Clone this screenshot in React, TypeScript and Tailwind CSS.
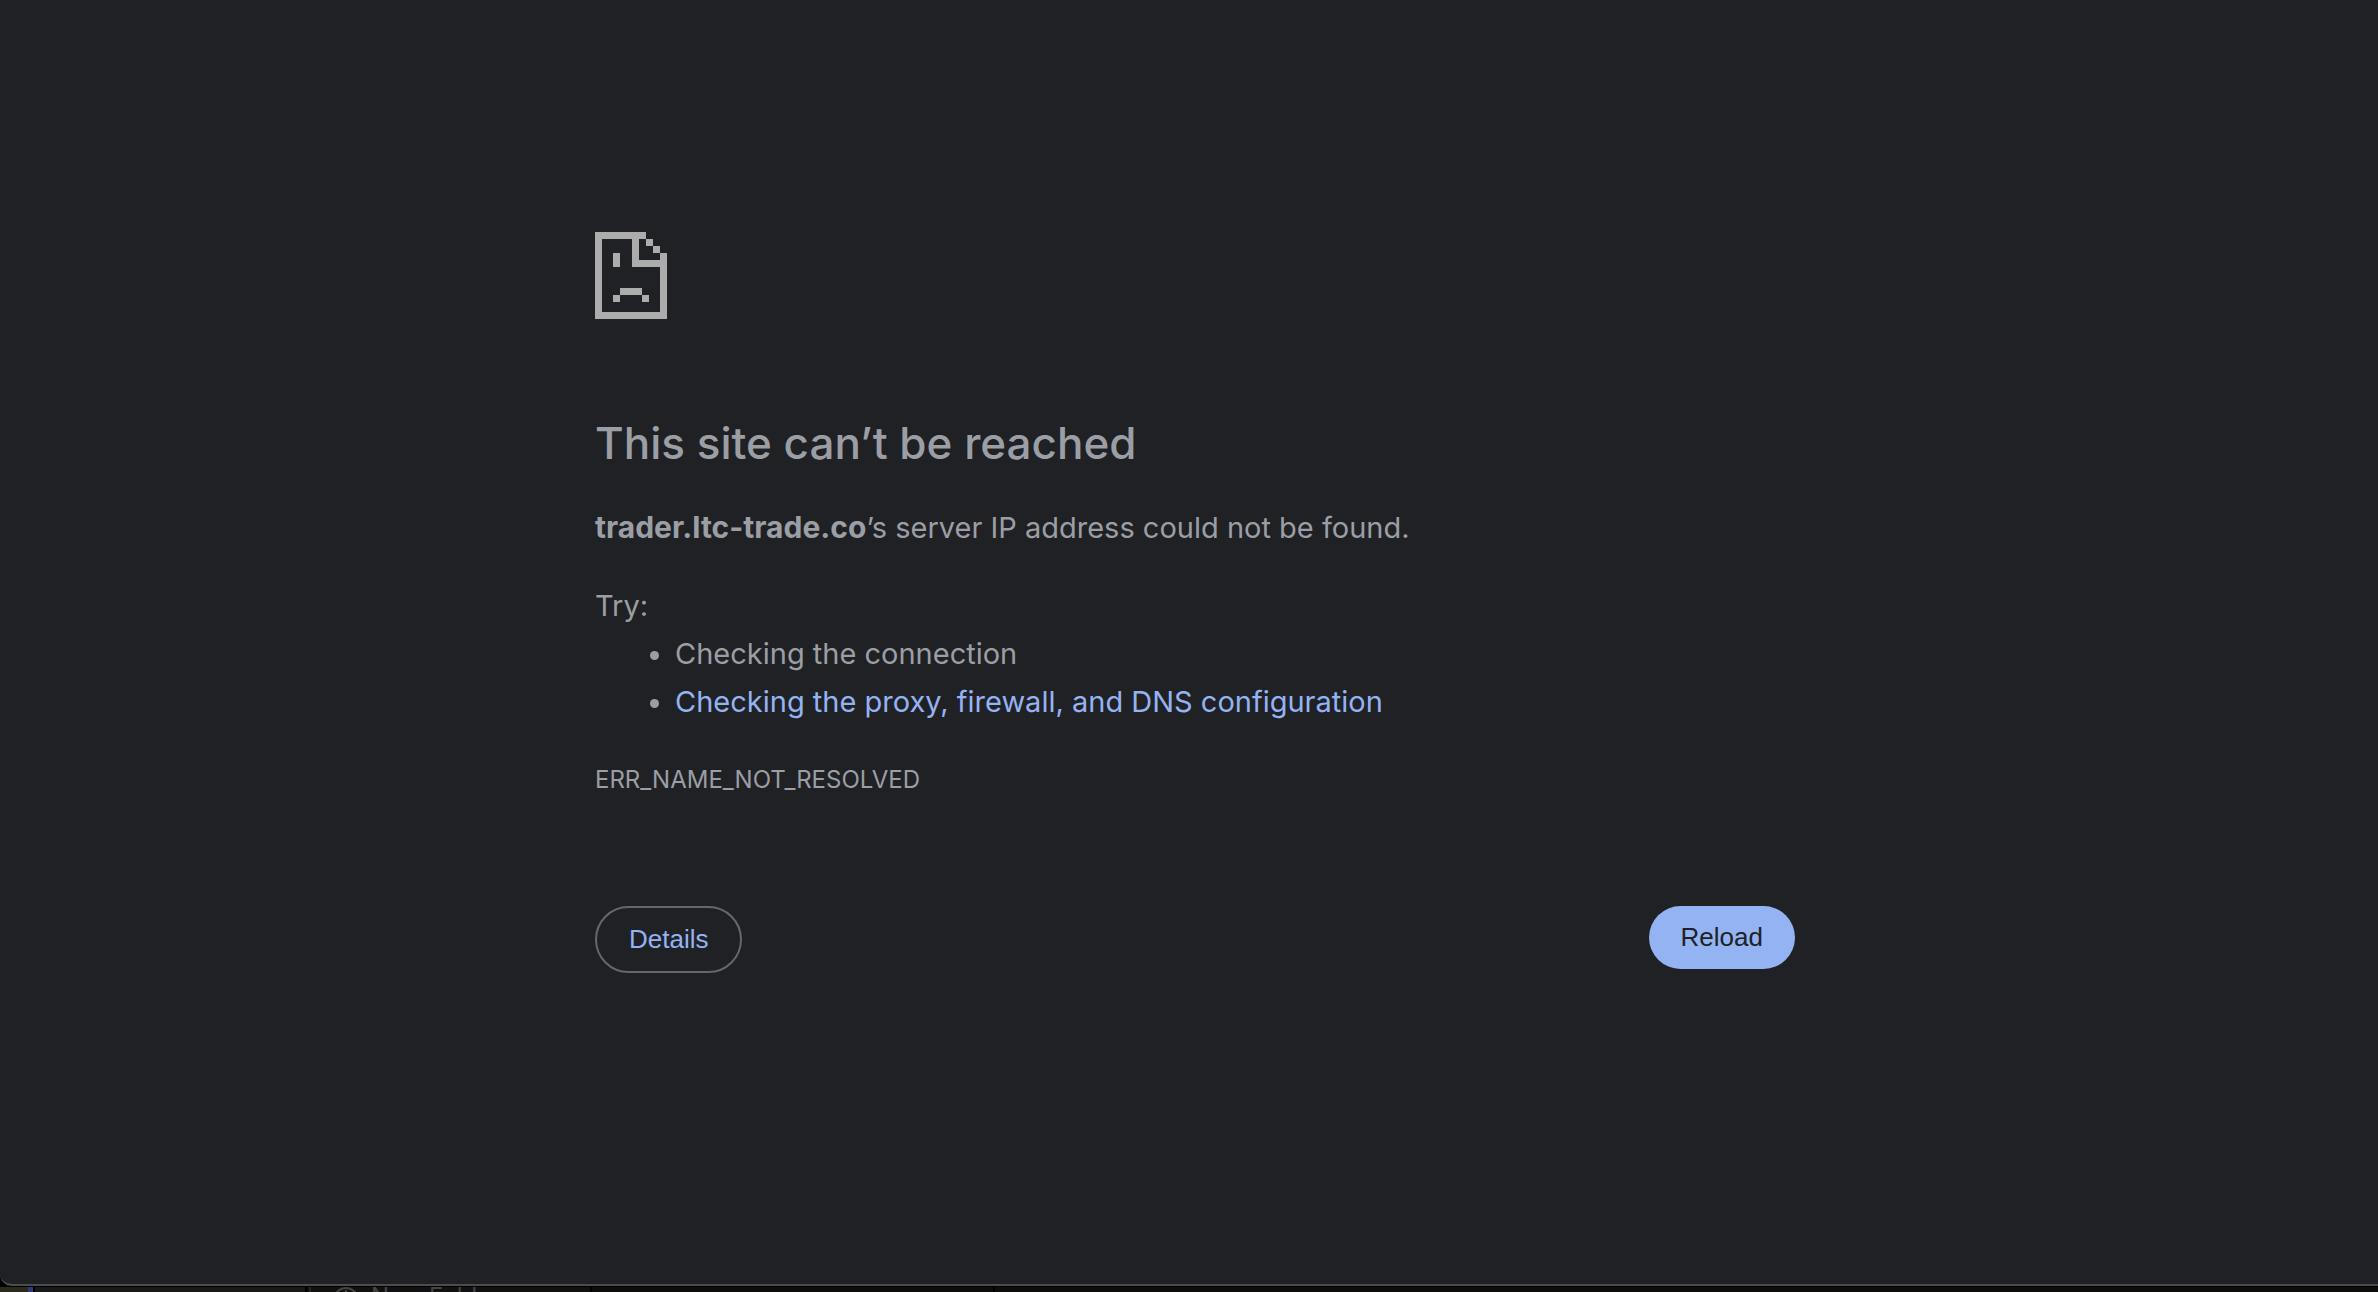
const suggestions = [
  { label: 'Checking the connection' },
  { label: 'Checking the proxy, firewall, and DNS configuration', href: '#buttons' },
];

function SadPageIcon() {
  return (
    <svg width="72" height="87" viewBox="0 0 72 87" fill="#acacac" shapeRendering="crispEdges" aria-hidden="true">
      <path d="M0 0H51V7H44V28H65V21H72V87H0ZM7 7V80H65V35H37V7Z" fillRule="evenodd" />
      <path d="M51 7H58V14H51ZM58 14H65V21H58Z" />
      <path d="M18 21H25V35H18ZM25 56H47V63H25ZM18 63H25V70H18ZM47 63H54V70H47Z" />
    </svg>
  );
}

function DesktopStrip() {
  return (
    <div className="flex h-[5px] overflow-hidden bg-[#0d0d0d] text-[#454545]">
      <div className="w-7 shrink-0 bg-[#2a2b1c]" />
      <div className="w-[5px] shrink-0 bg-[#2f3a80]" />
      <div className="mr-0.5 w-[274px] shrink-0 border-x-2 border-black bg-[#181818]" />
      <div className="flex w-[283px] shrink-0 gap-3 border-x-2 border-l-[#262626] border-r-black bg-[#111111] pl-[22px] text-[24px] leading-5">
        <svg width="26" height="26" viewBox="0 0 26 26" fill="none" stroke="currentColor" strokeWidth="2" className="shrink-0" aria-hidden="true">
          <circle cx="13" cy="13" r="12" />
          <path d="M13 3V20M8 15L13 20L18 15" />
        </svg>
        <span className="whitespace-nowrap">New Folder</span>
      </div>
      <div className="w-[403px] shrink-0 border-r-2 border-black" />
    </div>
  );
}

export default function App() {
  return (
    <div className="flex min-h-screen flex-col bg-black font-['Inter',sans-serif] text-[#9b9ea5]">
      <main className="grow rounded-bl-xl border-b-2 border-[#4c4c4c] bg-[#202124] pl-3">
        <div className="mx-auto max-w-[1200px] pt-[232px]">
          <SadPageIcon />

          <h1 className="mt-[94px] text-[44px] leading-[60px] font-medium">This site can’t be reached</h1>
          <p className="mt-[30px] text-[29px] leading-[48px]">
            <strong className="text-[30px] font-bold">trader.ltc-trade.co</strong>’s server IP address could not be found.
          </p>

          <div className="mt-[30px] text-[29px] leading-[48px]">
            <p>Try:</p>
            <ul className="list-disc pl-20">
              {suggestions.map((s) => (
                <li key={s.label}>
                  {s.href ? (
                    <a href={s.href} className="text-[#94b3f3]">
                      {s.label}
                    </a>
                  ) : (
                    s.label
                  )}
                </li>
              ))}
            </ul>
          </div>

          <p className="mt-[30px] text-[24px] leading-[48px]">ERR_NAME_NOT_RESOLVED</p>

          <div id="buttons" className="mt-[102px] flex items-start justify-between font-['Liberation_Sans',sans-serif] text-[26px]">
            <button type="button" className="h-[67px] rounded-full border-2 border-[#66676a] px-8 text-[#94b3f3]">
              Details
            </button>
            <button type="button" className="h-[63px] rounded-full bg-[#94b3f3] px-8 text-[#202124]">
              Reload
            </button>
          </div>
        </div>
      </main>
      <div className="h-px" />
      <DesktopStrip />
    </div>
  );
}
